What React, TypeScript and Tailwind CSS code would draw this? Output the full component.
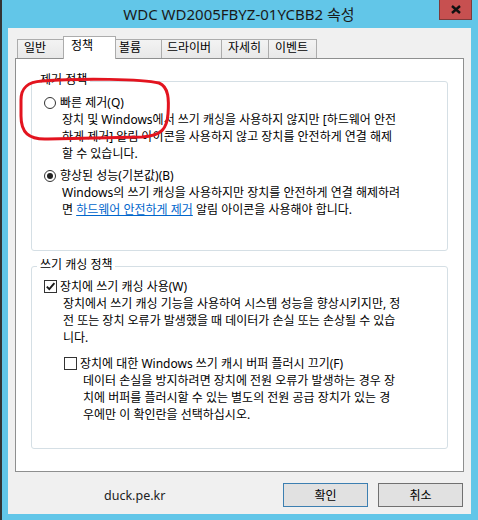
import React from "react";

function Radio({ checked }: { checked?: boolean }) {
  return (
    <span className="w-[12px] h-[12px] rounded-full border border-[#333333] bg-white flex items-center justify-center shrink-0">
      {checked && <span className="w-[6px] h-[6px] rounded-full bg-[#222222]" />}
    </span>
  );
}

function Check({ checked }: { checked?: boolean }) {
  return (
    <span className="w-[13px] h-[13px] border border-[#333333] bg-white flex items-center justify-center shrink-0">
      {checked && (
        <svg width="11" height="11" viewBox="0 0 11 11">
          <path d="M1.8 5.6 L4.3 8.2 L9.4 2.2" fill="none" stroke="#1a1a1a" strokeWidth="1.9" />
        </svg>
      )}
    </span>
  );
}

function Lines({ lines, className }: { lines: React.ReactNode[]; className?: string }) {
  return (
    <div className={className}>
      {lines.map((l, i) => (
        <div key={i} className="h-[17px] leading-[17px] whitespace-nowrap">
          {l}
        </div>
      ))}
    </div>
  );
}

export default function App() {
  const tabBase =
    "h-[19px] border-[#acacac] bg-gradient-to-b from-[#f3f3f3] to-[#e8e8e8] flex items-start leading-[16px] shrink-0";
  return (
    <div className="relative w-[478px] h-[520px] bg-[#62c6e8] border-l-2 border-[#333333] flex flex-col overflow-hidden font-['Noto_Sans','Noto_Sans_CJK_KR',sans-serif] text-[12px] text-black">
      {/* title bar */}
      <div className="h-[28px] shrink-0 flex items-center justify-center pr-[2px] text-[15px] text-[#1a1a1a]">
        WDC WD2005FBYZ-01YCBB2 속성
      </div>
      <div className="absolute top-0 right-[6px] w-[33px] h-[20px] bg-[#c75050] border border-t-0 border-[#7d3a3a] flex items-center justify-center">
        <svg width="10" height="9" viewBox="0 0 10 9">
          <path d="M1 1 L9 8 M9 1 L1 8" stroke="#111111" strokeWidth="2.4" />
        </svg>
      </div>

      {/* client */}
      <div className="ml-[6px] mr-[7px] h-[486px] shrink-0 bg-[#f0f0f0] px-[7px] pt-[8px] flex flex-col">
        {/* tabs */}
        <div className="ml-[2px] flex items-end h-[22px]">
          <div className={`${tabBase} w-[46px] border-t border-l pl-[6px]`}>일반</div>
          <div className="relative z-10 w-[53px] h-[23px] -mb-px border-t border-l border-r border-[#acacac] bg-white flex items-start pt-[1px] pl-[7px] leading-[16px] shrink-0">
            정책
          </div>
          <div className={`${tabBase} w-[45px] border-t pl-[3px]`}>볼륨</div>
          <div className={`${tabBase} w-[60px] border-t border-l pl-[5px]`}>드라이버</div>
          <div className={`${tabBase} w-[47px] border-t border-l pl-[6px]`}>자세히</div>
          <div className={`${tabBase} w-[49px] border-t border-l border-r pl-[6px]`}>이벤트</div>
        </div>

        {/* panel */}
        <div className="h-[414px] border border-[#8e8f8f] bg-white px-[15px] pt-[22px] flex flex-col">
          {/* group 1 */}
          <div className="relative h-[170px] border border-[#d5dfe5] rounded-[3px] pt-[12px] pl-[12px]">
            <span className="absolute -top-[11px] left-[5px] px-[3px] bg-white leading-[17px] whitespace-nowrap">
              제거 정책
            </span>
            <div className="h-[17px] flex items-center gap-[4px]">
              <Radio />
              <span className="leading-[17px]">빠른 제거(Q)</span>
            </div>
            <Lines
              className="pl-[18px]"
              lines={[
                "장치 및 Windows에서 쓰기 캐싱을 사용하지 않지만 [하드웨어 안전",
                "하게 제거] 알림 아이콘을 사용하지 않고 장치를 안전하게 연결 해제",
                "할 수 있습니다.",
              ]}
            />
            <div className="mt-[5px] h-[17px] flex items-center gap-[4px]">
              <Radio checked />
              <span className="leading-[17px]">향상된 성능(기본값)(B)</span>
            </div>
            <Lines
              className="pl-[18px]"
              lines={[
                "Windows의 쓰기 캐싱을 사용하지만 장치를 안전하게 연결 해제하려",
                <>
                  면 <span className="text-[#0066cc] underline">하드웨어 안전하게 제거</span> 알림 아이콘을 사용해야 합니다.
                </>,
              ]}
            />
          </div>

          {/* group 2 */}
          <div className="relative mt-[15px] h-[183px] border border-[#d5dfe5] rounded-[3px] pt-[11px] pl-[12px]">
            <span className="absolute -top-[11px] left-[5px] px-[3px] bg-white leading-[17px] whitespace-nowrap">
              쓰기 캐싱 정책
            </span>
            <div className="h-[17px] flex items-center gap-[3px]">
              <Check checked />
              <span className="leading-[17px]">장치에 쓰기 캐싱 사용(W)</span>
            </div>
            <Lines
              className="pl-[19px]"
              lines={[
                "장치에서 쓰기 캐싱 기능을 사용하여 시스템 성능을 향상시키지만, 정",
                "전 또는 장치 오류가 발생했을 때 데이터가 손실 또는 손상될 수 있습",
                "니다.",
              ]}
            />
            <div className="ml-[20px] mt-[9px]">
              <div className="h-[17px] flex items-center gap-[3px]">
                <Check />
                <span className="leading-[17px]">장치에 대한 Windows 쓰기 캐시 버퍼 플러시 끄기(F)</span>
              </div>
              <Lines
                className="pl-[19px]"
                lines={[
                  "데이터 손실을 방지하려면 장치에 전원 오류가 발생하는 경우 장",
                  "치에 버퍼를 플러시할 수 있는 별도의 전원 공급 장치가 있는 경",
                  "우에만 이 확인란을 선택하십시오.",
                ]}
              />
            </div>
          </div>
        </div>

        {/* bottom row */}
        <div className="mt-[11px] h-[24px] flex items-center">
          <span className="ml-[89px] text-[12.5px] text-[#222222] leading-[17px]">duck.pe.kr</span>
          <div className="ml-auto mr-[1px] flex gap-[10px]">
            <button className="w-[85px] h-[24px] border border-[#3c7fb1] bg-[#e1e1e1] flex items-center justify-center leading-[17px]">
              확인
            </button>
            <button className="w-[85px] h-[24px] border border-[#707070] bg-[#e1e1e1] flex items-center justify-center leading-[17px]">
              취소
            </button>
          </div>
        </div>
      </div>

      {/* red annotation */}
      <svg className="absolute left-0 top-0 pointer-events-none" width="478" height="520" viewBox="0 0 478 520">
        <path
          d="M40 81 C 80 78, 140 79, 157 83 C 167 87, 167 100, 166 114 C 165 128, 160 136, 140 137 L 46 139 C 26 140, 19 132, 19 116 L 19 100 C 19 88, 25 82, 40 81 Z"
          fill="none"
          stroke="#e3141f"
          strokeWidth="3"
        />
      </svg>
    </div>
  );
}
